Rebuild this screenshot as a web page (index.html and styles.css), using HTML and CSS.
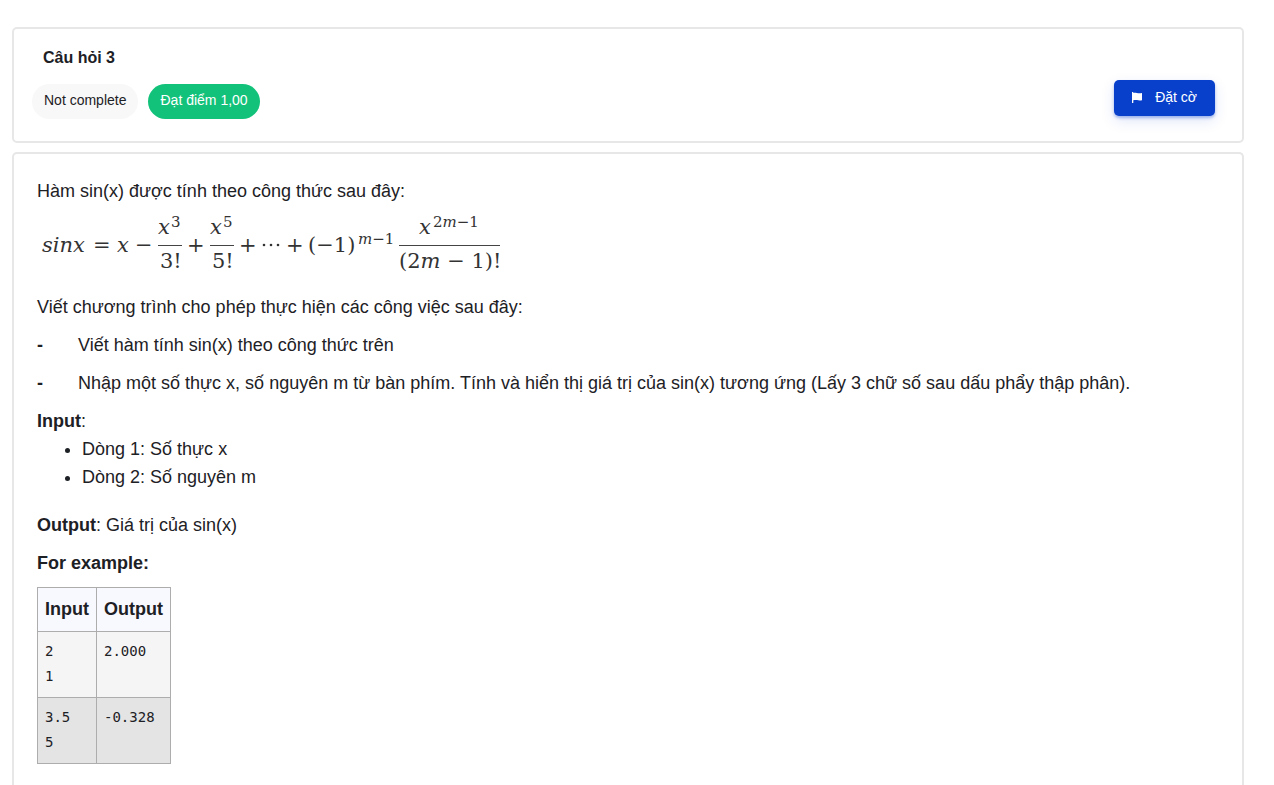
FILE: index.html
```html
<!DOCTYPE html>
<html lang="vi">
<head>
<meta charset="utf-8">
<title>Câu hỏi 3</title>
<link rel="stylesheet" href="styles.css">
</head>
<body>
<main class="question">
  <header class="card info">
    <div class="info-main">
      <h1 class="title">Câu hỏi 3</h1>
      <div class="badges">
        <span class="badge">Not complete</span>
        <span class="badge badge-grade">Đạt điểm 1,00</span>
      </div>
    </div>
    <button class="flag-button" type="button">
      <svg class="flag-icon" viewBox="0 0 12 12" aria-hidden="true"><path d="M1 1h1.300v1C4.500 1 6.500 2.900 11 2v7.200C7 10 5 8.500 2.300 9.200V12H1z" fill="currentColor"/></svg>
      <span>Đặt cờ</span>
    </button>
  </header>
  <section class="card content">
    <p class="lead">Hàm sin(x) được tính theo công thức sau đây:</p>
    <svg class="formula" viewBox="0 0 468 78" role="img" aria-label="Công thức sin x">
      <g class="math">
        <text class="var" x="5" y="47">sinx</text>
        <text x="56" y="47">=</text>
        <text class="var" x="80" y="47">x</text>
        <text x="98" y="47">−</text>
        <text class="var" x="121" y="29">x</text>
        <text class="sup" x="134" y="22">3</text>
        <text x="123" y="63">3!</text>
        <text x="150" y="47">+</text>
        <text class="var" x="173" y="29">x</text>
        <text class="sup" x="186" y="22">5</text>
        <text x="175" y="63">5!</text>
        <text x="202" y="47">+</text>
        <text x="249" y="47">+</text>
        <text x="271" y="47">(−1)</text>
        <text class="sup" x="321" y="39"><tspan class="var">m</tspan>−1</text>
        <text class="var" x="382" y="29">x</text>
        <text class="sup" x="396" y="22">2<tspan class="var">m</tspan>−1</text>
        <text x="362" y="63">(2<tspan class="var">m</tspan> − 1)!</text>
      </g>
      <path class="rule" d="M121 40.500h24M173 40.500h24M362 40.500h101"/>
      <g class="dots"><circle cx="227" cy="40" r="1.300"/><circle cx="234" cy="40" r="1.300"/><circle cx="241" cy="40" r="1.300"/></g>
    </svg>
    <p>Viết chương trình cho phép thực hiện các công việc sau đây:</p>
    <p class="task"><strong class="dash">-</strong><span>Viết hàm tính sin(x) theo công thức trên</span></p>
    <p class="task"><strong class="dash">-</strong><span>Nhập một số thực x, số nguyên m từ bàn phím. Tính và hiển thị giá trị của sin(x) tương ứng (Lấy 3 chữ số sau dấu phẩy thập phân).</span></p>
    <p class="lead"><strong>Input</strong>:</p>
    <ul class="inputs">
      <li>Dòng 1: Số thực x</li>
      <li>Dòng 2: Số nguyên m</li>
    </ul>
    <p><strong>Output</strong>: Giá trị của sin(x)</p>
    <p><strong>For example:</strong></p>
    <table class="examples">
      <thead><tr><th scope="col">Input</th><th scope="col">Output</th></tr></thead>
      <tbody>
        <tr><td><pre>2
1</pre></td><td><pre>2.000</pre></td></tr>
        <tr><td><pre>3.5
5</pre></td><td><pre>-0.328</pre></td></tr>
      </tbody>
    </table>
  </section>
</main>
</body>
</html>
```
FILE: styles.css
```css
* { box-sizing: border-box; }
html { background: #fff; }
body {
  margin: 0;
  color: #1d2125;
  font: 18px/28px "Liberation Sans", Arial, sans-serif;
}
.question {
  display: flex;
  flex-direction: column;
  gap: 9px;
  min-height: 100vh;
  padding: 27px 30px 0 12px;
}
.card {
  border: 2px solid #e7e7e7;
  border-radius: 5px;
}
.info {
  display: flex;
  justify-content: space-between;
  align-items: center;
  padding: 17px 27px 22px 18px;
}
.title {
  margin: 0 0 14px 11px;
  font-size: 16px;
  line-height: 24px;
}
.badges { display: flex; gap: 10px; }
.badge {
  padding: 6px 12px 9px;
  border-radius: 18px;
  background: #f8f8f8;
  font-size: 14px;
  line-height: 20px;
}
.badge-grade { background: #12c27a; color: #fff; }
.flag-button {
  display: flex;
  align-items: center;
  gap: 12px;
  height: 36px;
  margin-top: 30px;
  padding: 0 18px 1px 17px;
  border: 0;
  border-radius: 5px;
  background: #0840cc;
  box-shadow: 0 2px 3px #0840cc55, 0 5px 14px #0840cc20;
  color: #fff;
  font: 14px/20px "Liberation Sans", Arial, sans-serif;
}
.flag-icon { width: 12px; height: 12px; }
.content {
  flex: 1;
  padding: 23px 24px 24px 23px;
  border-bottom: 0;
  border-radius: 5px 5px 0 0;
}
p { margin: 0 0 10px; }
.lead { margin: 0; }
.formula {
  display: block;
  width: 468px;
  max-width: 100%;
  margin-bottom: 10px;
}
.math {
  fill: #333;
  font-family: "DejaVu Serif", serif;
  font-size: 21px;
}
.var { font-style: italic; }
.sup { font-size: 15px; }
.rule { stroke: #444; }
.dots { fill: #333; }
.task { display: flex; }
.dash { flex: 0 0 41px; }
.inputs { margin: 0 0 20px; padding-left: 45px; }
.examples { border-collapse: collapse; }
.examples th, .examples td {
  padding: 8px 7px;
  border: 1px solid #adadad;
  text-align: left;
  vertical-align: top;
}
.examples td { padding-top: 7px; }
.examples th { background: #f8f9ff; line-height: 27px; }
.examples tbody tr { background: #f5f5f5; }
.examples tbody tr:nth-child(even) { background: #e4e4e4; }
.examples pre {
  margin: 0;
  font: 14px/25px "DejaVu Sans Mono", monospace;
}
```
